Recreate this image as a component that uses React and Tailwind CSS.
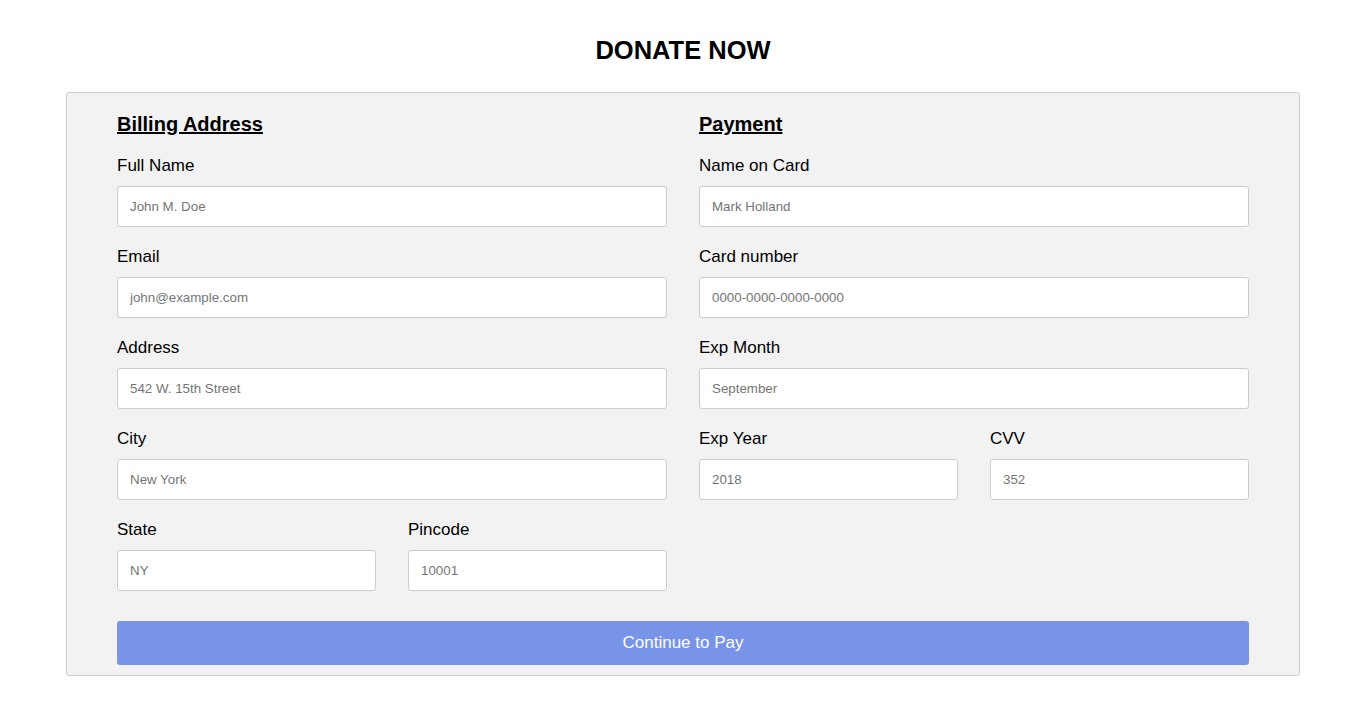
import React from "react";

const font = { fontFamily: '"Liberation Sans", Arial, sans-serif' };

function Field({ label, placeholder }) {
  return (
    <div className="flex flex-col">
      <label className="block h-[20px] leading-[20px] text-[17px] text-black mt-[1px] mb-[10px]">{label}</label>
      <input
        type="text"
        placeholder={placeholder}
        className="block w-full h-[41px] mb-[19px] px-[12px] bg-white border border-[#cccccc] rounded-[3px] text-[13.333px] text-black placeholder:text-[#757575] outline-none"
      />
    </div>
  );
}

export default function App() {
  return (
    <div className="min-h-[712px] bg-white pt-[35px]" style={font}>
      <h2 className="h-[30px] leading-[30px] text-center text-[25.5px] font-bold text-black mb-[27px]">DONATE NOW</h2>
      <div className="mx-[66px] bg-[#f2f2f2] border border-[#cccccc] rounded-[3px] px-[50px] pt-[19px] pb-[10px]">
        <div className="grid grid-cols-2 gap-x-[32px]">
          <div>
            <h3 className="h-[24px] leading-[24px] text-[20px] font-bold underline text-black mb-[19px]">Billing Address</h3>
            <Field label="Full Name" placeholder="John M. Doe" />
            <Field label="Email" placeholder="john@example.com" />
            <Field label="Address" placeholder="542 W. 15th Street" />
            <Field label="City" placeholder="New York" />
            <div className="grid grid-cols-2 gap-x-[32px]">
              <Field label="State" placeholder="NY" />
              <Field label="Pincode" placeholder="10001" />
            </div>
          </div>
          <div>
            <h3 className="h-[24px] leading-[24px] text-[20px] font-bold underline text-black mb-[19px]">Payment</h3>
            <Field label="Name on Card" placeholder="Mark Holland" />
            <Field label="Card number" placeholder="0000-0000-0000-0000" />
            <Field label="Exp Month" placeholder="September" />
            <div className="grid grid-cols-2 gap-x-[32px]">
              <Field label="Exp Year" placeholder="2018" />
              <Field label="CVV" placeholder="352" />
            </div>
          </div>
        </div>
        <button className="mt-[11px] w-full h-[44px] bg-[#7794e9] text-white text-[17px] rounded-[3px]">
          Continue to Pay
        </button>
      </div>
    </div>
  );
}
